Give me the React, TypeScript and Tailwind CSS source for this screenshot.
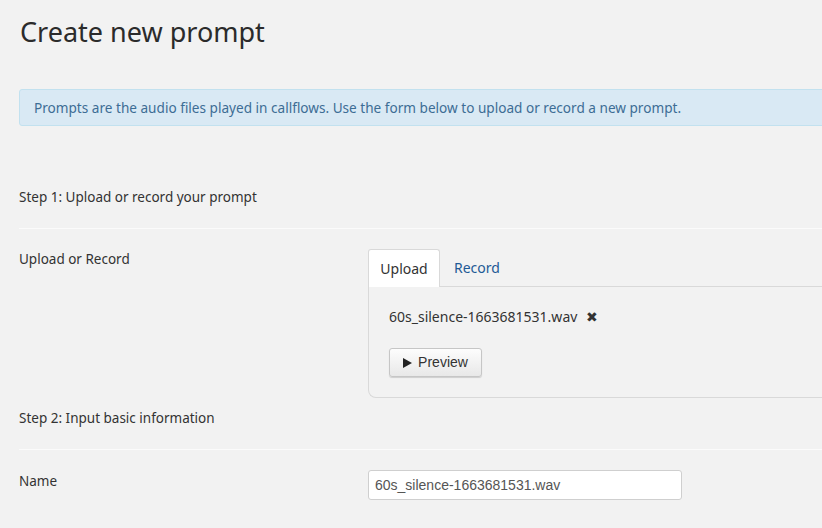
export default function App() {
  return (
    <div className="min-h-[528px] w-[822px] overflow-hidden bg-[#f2f2f2] font-['Noto_Sans',sans-serif] text-[#333]">
      <div className="pl-[19px]">
        <h1 className="pt-[14px] pl-px text-[27px] leading-[36px] text-[#2b2b2b]">Create new prompt</h1>

        <div className="mt-[39px] -mr-4 rounded-[3px] border border-[#c2e1ef] bg-[#d9e9f4] py-[8px] pl-[14px] text-[13.6px] leading-[19px] text-[#3d6d95]">
          Prompts are the audio files played in callflows. Use the form below to upload or record a new prompt.
        </div>

        <div className="mt-[62px] text-[13.5px] leading-[19px]">Step 1: Upload or record your prompt</div>
        <div className="mt-[21px] border-t border-[#fbfbfb]" />

        <div className="mt-[20px] flex">
          <div className="w-[349px] pt-[1px] text-[13.5px] leading-[19px]">Upload or Record</div>
          <div className="flex-1">
            <div className="flex h-[38px] items-stretch">
              <div className="flex w-[72px] items-center justify-center rounded-t-[3px] border border-b-0 border-[#d9d9d9] bg-white text-[14px] text-[#333]">
                Upload
              </div>
              <div className="flex flex-1 items-center border-b border-[#d9d9d9] pl-[14px] text-[14px] text-[#1f5a96]">
                Record
              </div>
            </div>
            <div className="-mr-4 h-[111px] rounded-bl-[8px] border-b border-l border-[#d9d9d9] pt-[20px] pl-[20px]">
              <div className="flex items-center text-[14px] leading-[20px]">
                <span>60s_silence-1663681531.wav</span>
                <span className="ml-[9px] text-[14px] text-[#333]">✖</span>
              </div>
              <button
                type="button"
                className="mt-[21px] flex h-[29px] w-[93px] items-center justify-center gap-[6px] rounded-[3px] border border-[#c6c6c6] bg-gradient-to-b from-[#fdfdfd] to-[#e8e8e8] font-['Liberation_Sans',sans-serif] text-[14px] text-[#333] shadow-[0_1px_1px_rgba(0,0,0,0.15)]"
              >
                <svg width="9" height="10" viewBox="0 0 9 10">
                  <path d="M0 0L9 5L0 10Z" fill="#222" />
                </svg>
                Preview
              </button>
            </div>
          </div>
        </div>

        <div className="mt-[11px] text-[13.5px] leading-[19px]">Step 2: Input basic information</div>
        <div className="mt-[21px] border-t border-[#fbfbfb]" />

        <div className="mt-[20px] flex">
          <div className="w-[349px] pt-[2px] text-[13.5px] leading-[19px]">Name</div>
          <input
            readOnly
            value="60s_silence-1663681531.wav"
            className="h-[30px] w-[314px] rounded-[3px] border border-[#cfcfcf] bg-white px-[6px] font-['Liberation_Sans',sans-serif] text-[14px] text-[#555] outline-none"
          />
        </div>
      </div>
    </div>
  )
}
